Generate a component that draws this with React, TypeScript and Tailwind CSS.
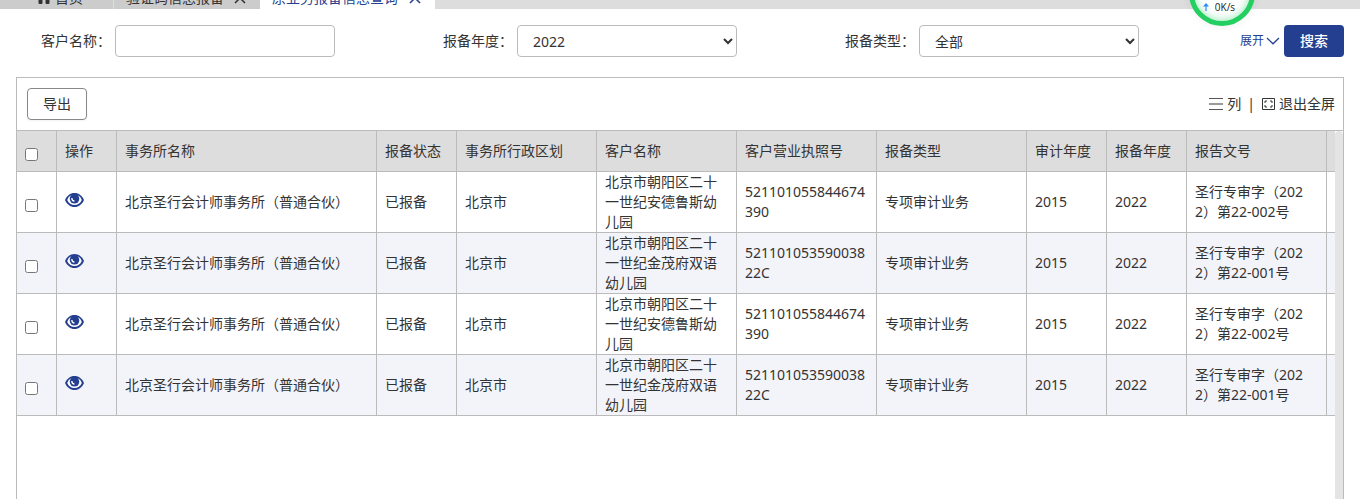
const COLUMNS = [
  { label: '操作', width: 'w-[60px]' },
  { label: '事务所名称', width: 'w-[260px]' },
  { label: '报备状态', width: 'w-[80px]' },
  { label: '事务所行政区划', width: 'w-[140px]' },
  { label: '客户名称', width: 'w-[140px]' },
  { label: '客户营业执照号', width: 'w-[140px]' },
  { label: '报备类型', width: 'w-[150px]' },
  { label: '审计年度', width: 'w-[80px]' },
  { label: '报备年度', width: 'w-[80px]' },
  { label: '报告文号', width: 'w-[140px]' },
];

const ANDELUSI = {
  firm: '北京圣行会计师事务所（普通合伙）',
  status: '已报备',
  region: '北京市',
  customer: '北京市朝阳区二十一世纪安德鲁斯幼儿园',
  license: '521101055844674390',
  type: '专项审计业务',
  auditYear: '2015',
  reportYear: '2022',
  docNo: '圣行专审字（2022）第22-002号',
};

const JINMAOFU = {
  ...ANDELUSI,
  customer: '北京市朝阳区二十一世纪金茂府双语幼儿园',
  license: '52110105359003822C',
  docNo: '圣行专审字（2022）第22-001号',
};

const ROWS = [ANDELUSI, JINMAOFU, ANDELUSI, JINMAOFU];

const CELL = 'border-r border-b border-[#bbb] px-2 break-all';

function HomeIcon() {
  return (
    <svg viewBox="0 0 14 14" className="h-3.5 w-3.5" fill="currentColor" aria-hidden="true">
      <path d="M7 0 0 6.500h1.500V12q0 1 1 1h2q1 0 1-1V8.500h3V12q0 1 1 1h2q1 0 1-1V6.500H14z" />
    </svg>
  );
}

function CloseIcon() {
  return (
    <svg viewBox="0 0 12 12" className="h-3 w-3" fill="none" stroke="currentColor" strokeWidth="1.5" aria-hidden="true">
      <path d="m1 1 10 10M11 1 1 11" />
    </svg>
  );
}

function ChevronIcon() {
  return (
    <svg viewBox="0 0 14 8" className="h-2 w-3.5" fill="none" stroke="currentColor" strokeWidth="1.3" aria-hidden="true">
      <path d="m1 1 6 5.800L13 1" />
    </svg>
  );
}

function EyeIcon() {
  return (
    <svg viewBox="0 0 19 14" className="h-3.5 w-[19px]" aria-hidden="true">
      <path
        d="M9.500 0C5.200 0 1.800 2.700 0 7c1.800 4.300 5.200 7 9.500 7s7.700-2.700 9.500-7c-1.800-4.300-5.200-7-9.500-7Z"
        fill="#243f8f"
      />
      <path d="M5.200 2.800C3.900 3.800 2.900 5.200 2.200 7c1.500 3.200 4.100 5 7.300 5s5.800-1.800 7.300-5c-.7-1.800-1.700-3.200-3-4.200Z" fill="#fff" />
      <circle cx="9.500" cy="5.800" r="4.800" fill="#243f8f" />
      <path d="M6.800 5c0 1.900 1 3 2.700 3.200" fill="none" stroke="#fff" strokeWidth="1.300" />
    </svg>
  );
}

function ListIcon() {
  return (
    <svg viewBox="0 0 14 14" className="h-3.5 w-3.5" aria-hidden="true">
      <path d="M0 1h14v1H0zM0 12h14v1H0z" fill="#555" />
      <path d="M0 6h14v2H0z" fill="#999" />
    </svg>
  );
}

function FullscreenIcon() {
  return (
    <svg viewBox="0 0 14 14" className="h-3.5 w-3.5" fill="none" stroke="#333" aria-hidden="true">
      <path d="M1.500 1.500h12v11h-12z" />
      <path d="M4 6V4h2M9 4h2v2M11 8v2H9M6 10H4V8" />
    </svg>
  );
}

function TabBar() {
  return (
    <nav className="flex h-[9px] items-end overflow-hidden bg-[#ddd]">
      <button type="button" className="mr-px flex h-[22px] w-[113px] items-center gap-1 bg-[#ccc] pl-[37px]">
        <HomeIcon />
        首页
      </button>
      <button type="button" className="flex h-[22px] w-[146px] items-center justify-between bg-[#ccc] pr-3.5 pl-3 whitespace-nowrap">
        验证码信息报备
        <CloseIcon />
      </button>
      <button type="button" className="flex h-[22px] w-[175px] items-center justify-between bg-white pr-3.5 pl-3 whitespace-nowrap text-[#243f8f]">
        原业务报备信息查询
        <CloseIcon />
      </button>
    </nav>
  );
}

function SpeedBall() {
  return (
    <div className="absolute -top-10 right-[105px] flex h-[66px] w-[66px] items-end justify-center gap-1.5 rounded-full border-[5px] border-[#22cf60] bg-white pr-1.5 pb-2 font-['Open_Sans',sans-serif] text-[10px] leading-3 text-[#222] shadow-[0_0_6px_3px_rgba(0,0,0,0.04),inset_0_0_8px_rgba(34,207,96,0.5)]">
      <svg viewBox="0 0 6 8" className="mb-0.5 h-2 w-1.5" aria-hidden="true">
        <path d="M3 0 6 3.500H3.600V8H2.400V3.500H0z" fill="#2b8cff" />
      </svg>
      0K/s
    </div>
  );
}

function SearchForm() {
  return (
    <form className="flex items-center px-4 pt-4" onSubmit={(e) => e.preventDefault()}>
      <div className="grid flex-1 grid-cols-3">
        <div className="flex items-center gap-1">
          <label htmlFor="customer" className="w-[95px] text-right">客户名称：</label>
          <input id="customer" type="text" className="h-8 w-[220px] rounded border border-[#bbb] px-3" />
        </div>
        <div className="flex items-center gap-1">
          <label htmlFor="year" className="w-[95px] text-right">报备年度：</label>
          <select id="year" defaultValue="2022" className="h-8 w-[220px] rounded border border-[#bbb] bg-white pl-[11px]">
            <option>2022</option>
            <option>2021</option>
          </select>
        </div>
        <div className="flex items-center gap-1">
          <label htmlFor="type" className="w-[95px] text-right">报备类型：</label>
          <select id="type" defaultValue="全部" className="h-8 w-[220px] rounded border border-[#bbb] bg-white pl-[11px]">
            <option>全部</option>
            <option>专项审计业务</option>
          </select>
        </div>
      </div>
      <div className="flex w-[122px] items-center justify-end gap-1">
        <button type="button" className="flex items-center gap-0.5 text-xs text-[#243f8f]">
          展开
          <ChevronIcon />
        </button>
        <button type="submit" className="h-8 w-[60px] rounded bg-[#243f8f] font-medium text-white">搜索</button>
      </div>
    </form>
  );
}

function ReportTable() {
  return (
    <table className="w-full table-fixed border-separate border-spacing-0">
      <thead>
        <tr className="h-[41px] bg-[#ddd] text-left">
          <th className={`${CELL} w-10`}>
            <input type="checkbox" aria-label="全选" className="mt-1.5 block h-[13px] w-[13px]" />
          </th>
          {COLUMNS.map((column) => (
            <th key={column.label} className={`${CELL} ${column.width} font-normal whitespace-nowrap`}>
              {column.label}
            </th>
          ))}
          <th className="border-b border-[#bbb]" />
        </tr>
      </thead>
      <tbody>
        {ROWS.map((row, index) => (
          <tr key={index} className="h-[61px] even:bg-[#f3f4f9]">
            <td className={CELL}>
              <input type="checkbox" aria-label={row.customer} className="mt-1.5 block h-[13px] w-[13px]" />
            </td>
            <td className={CELL}>
              <button type="button" aria-label="查看" className="mb-1 block">
                <EyeIcon />
              </button>
            </td>
            <td className={CELL}>{row.firm}</td>
            <td className={CELL}>{row.status}</td>
            <td className={CELL}>{row.region}</td>
            <td className={CELL}>{row.customer}</td>
            <td className={CELL}>{row.license}</td>
            <td className={CELL}>{row.type}</td>
            <td className={CELL}>{row.auditYear}</td>
            <td className={CELL}>{row.reportYear}</td>
            <td className={CELL}>{row.docNo}</td>
            <td className="border-b border-[#bbb]" />
          </tr>
        ))}
      </tbody>
    </table>
  );
}

export default function App() {
  return (
    <div
      lang="zh-CN"
      className="relative flex h-screen flex-col overflow-hidden bg-white font-['Noto_Sans','Noto_Sans_CJK_SC',sans-serif] text-sm leading-5 text-[#333]"
    >
      <TabBar />
      <SpeedBall />
      <SearchForm />
      <main className="mx-4 mt-5 flex min-h-0 flex-1 flex-col border border-b-0 border-[#bbb]">
        <div className="flex items-center justify-between border-b border-[#bbb] py-2.5 pr-2 pl-2.5">
          <button type="button" className="h-8 w-[60px] rounded border border-[#888] shadow-xs">导出</button>
          <div className="flex items-center gap-1">
            <button type="button" className="flex items-center gap-1">
              <ListIcon />
              列
            </button>
            <span className="px-0.5">|</span>
            <button type="button" className="flex items-center gap-1">
              <FullscreenIcon />
              退出全屏
            </button>
          </div>
        </div>
        <div className="flex min-h-0 flex-1">
          <div className="min-w-0 flex-1 overflow-hidden">
            <ReportTable />
          </div>
          <div className="w-2 rounded-t bg-[#e4e4e4]" />
        </div>
      </main>
    </div>
  );
}
